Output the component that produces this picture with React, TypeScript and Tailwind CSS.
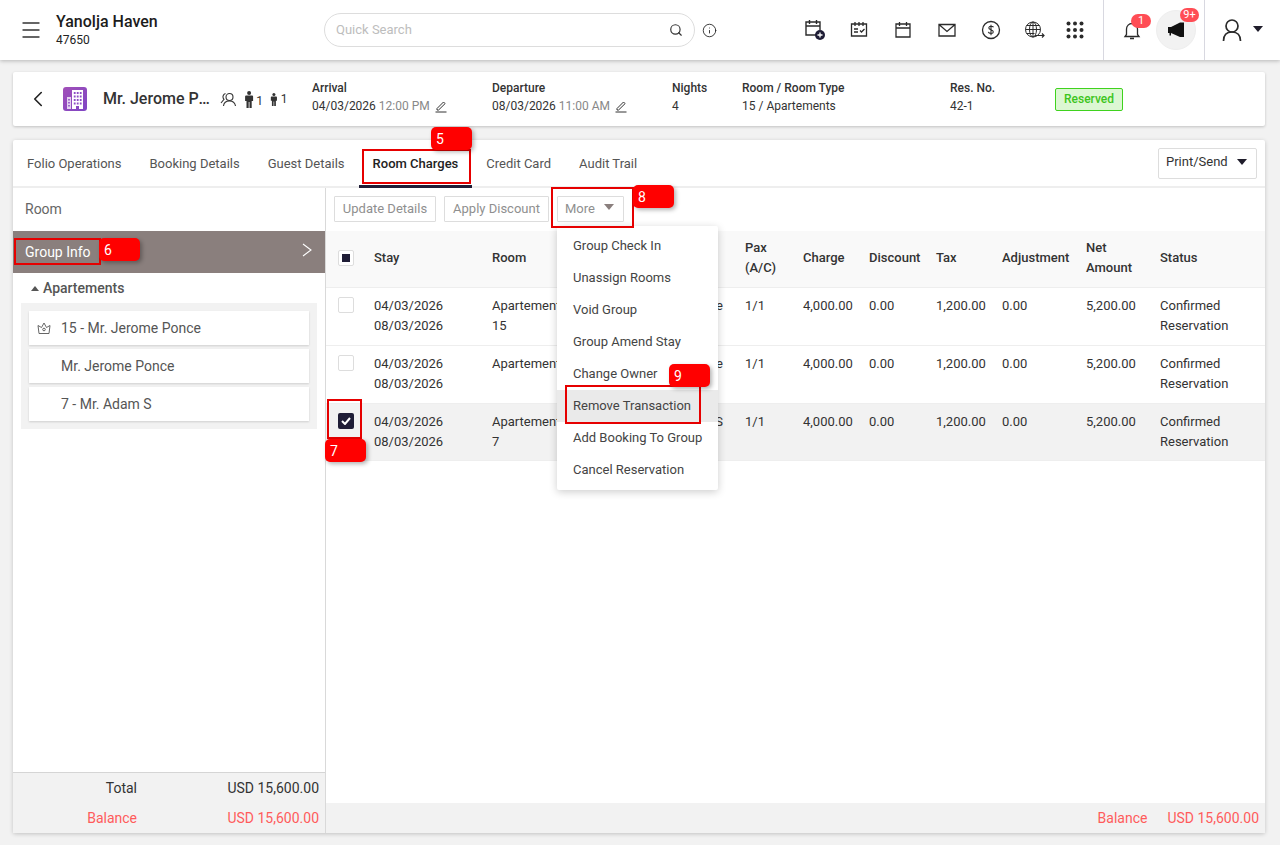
import { ChevronLeft, Info, Menu, Search } from "lucide-react";
import type { ReactNode } from "react";

const tabs = ["Folio Operations", "Booking Details", "Guest Details", "Room Charges", "Credit Card", "Audit Trail"];

const menuItems = [
  "Group Check In",
  "Unassign Rooms",
  "Void Group",
  "Group Amend Stay",
  "Change Owner",
  "Remove Transaction",
  "Add Booking To Group",
  "Cancel Reservation",
];

const rows = [
  { room: "15", guest: "Mr. Jerome Ponce", checked: false },
  { room: "", guest: "Mr. Jerome Ponce", checked: false },
  { room: "7", guest: "Mr. Adam S", checked: true },
];

const tableCols = "grid grid-cols-[48px_118px_125px_128px_58px_66px_67px_66px_84px_74px_1fr]";

const Icon = ({ children, w = 20 }: { children: ReactNode; w?: number }) => (
  <svg width={w} height={w} viewBox="0 0 20 20" fill="none" stroke="#2b2b2b" strokeWidth="1.3">
    {children}
  </svg>
);

const Caret = ({ color = "#1f1d2b" }: { color?: string }) => (
  <svg width="10" height="6" viewBox="0 0 10 6">
    <path d="M0 0h10L5 6z" fill={color} />
  </svg>
);

const Pencil = () => (
  <svg width="14" height="14" viewBox="0 0 14 14" fill="none" stroke="#333" strokeWidth="1">
    <path d="M3 9.500 9.500 3l1.600 1.600L4.600 11H3z" />
    <path d="M1.500 13h11" />
  </svg>
);

const Standing = ({ h }: { h: number }) => (
  <svg width={h * 0.6} height={h} viewBox="0 0 10 17" fill="#333">
    <circle cx="5" cy="2" r="2" />
    <path d="M1 5.500Q1 4.500 2 4.500h6q1 0 1 1V10H7.600v7H5.400v-6h-.8v6H2.400v-7H1z" />
  </svg>
);

const Marker = ({ n, className }: { n: number; className: string }) => (
  <div
    className={`absolute h-[23px] w-[41px] rounded-[5px] bg-[#ff0000] pl-[5px] text-[14px] leading-[24px] text-white shadow-[2px_2px_4px_rgba(0,0,0,0.3)] ${className}`}
  >
    {n}
  </div>
);

const Frame = ({ className }: { className: string }) => (
  <div className={`pointer-events-none absolute border-2 border-[#e60000] ${className}`} />
);

const Check = ({ on }: { on: boolean }) =>
  on ? (
    <div className="flex h-4 w-4 items-center justify-center rounded-[2px] bg-[#1f1d36]">
      <svg width="10" height="8" viewBox="0 0 10 8" fill="none" stroke="#fff" strokeWidth="2">
        <path d="M1 4l3 3 5-6" />
      </svg>
    </div>
  ) : (
    <div className="h-4 w-4 rounded-[2px] border border-[#ddd] bg-white" />
  );

function Header() {
  return (
    <header className="flex h-[60px] items-center bg-white shadow-[0_1px_4px_rgba(0,0,0,0.25)]">
      <div className="flex w-[324px] items-center pl-[19px]">
        <Menu size={24} strokeWidth={1.4} color="#333" />
        <div className="ml-[13px]">
          <div className="text-[16px] font-medium leading-[20px] text-[#1c1c1c]">Yanolja Haven</div>
          <div className="text-[12px] leading-[16px] text-[#222]">47650</div>
        </div>
      </div>
      <div className="flex h-[34px] w-[371px] items-center justify-between rounded-full border border-[#ddd] pl-[11px] pr-[11px]">
        <span className="text-[13px] text-[#bdbdbd]">Quick Search</span>
        <Search size={14} color="#333" />
      </div>
      <Info size={15} strokeWidth={1.4} color="#222" className="ml-[7px]" />
      <div className="ml-[76px] flex w-[300px] shrink-0 items-center">
        <div className="flex w-[44px] justify-center">
          <svg width="22" height="24" viewBox="0 0 22 24" fill="none" stroke="#2b2b2b" strokeWidth="1.4">
            <path d="M12 17H2V4h14v8M2 8h14M5.500 2v4M12.500 2v4" />
            <circle cx="16" cy="17" r="5" fill="#1f1d36" stroke="none" />
            <path d="M16 14.500v5M13.500 17h5" stroke="#fff" strokeWidth="1.300" />
          </svg>
        </div>
        <div className="flex w-[44px] justify-center">
          <Icon>
            <path d="M2.500 4h15v12h-15zM6 2v4M10 2v4M14 2v4M5 9h4M5 12h4M11 10.500l1.500 1.500 3-3" />
          </Icon>
        </div>
        <div className="flex w-[44px] justify-center">
          <Icon>
            <path d="M3 4h14v13H3zM3 8h14M6.500 2v4M13.500 2v4" />
          </Icon>
        </div>
        <div className="flex w-[44px] justify-center">
          <Icon>
            <path d="M2 4.500h16v11.500H2zM2 4.500l8 7 8-7" />
          </Icon>
        </div>
        <div className="flex w-[44px] justify-center">
          <svg width="20" height="20" viewBox="0 0 20 20" fill="none" stroke="#2b2b2b" strokeWidth="1.300">
            <circle cx="10" cy="10" r="8.500" />
            <path d="M12.500 7.300C12 6 8 5.600 7.800 7.700c-.2 2.300 4.700 1.800 4.500 4.300-.2 2.200-4.500 1.900-5-.1M10 4.800v10.400" strokeWidth="1.100" />
          </svg>
        </div>
        <div className="flex w-[44px] justify-center">
          <svg width="22" height="20" viewBox="0 0 22 20" fill="none" stroke="#2b2b2b" strokeWidth="1">
            <circle cx="9" cy="9.500" r="7.500" />
            <ellipse cx="9" cy="9.500" rx="3.500" ry="7.500" />
            <path d="M1.500 9.500h15M2.500 5.500h13M2.500 13.500h8M9 2v15" />
            <path d="M11 15.500h9M18 13.500l2 2-2 2" strokeWidth="1.200" />
          </svg>
        </div>
        <div className="flex w-[36px] justify-center">
          <svg width="18" height="18" viewBox="0 0 18 18" fill="#2b2b2b">
            {[2.500, 9, 15.500].flatMap((y) =>
              [2.500, 9, 15.500].map((x) => <circle key={`${x}-${y}`} cx={x} cy={y} r="2" />),
            )}
          </svg>
        </div>
      </div>
      <div className="relative ml-[10px] flex h-[60px] w-[101px] items-center border-l border-[#d8d8e0]">
        <svg width="18" height="20" viewBox="0 0 18 20" fill="none" stroke="#2b2b2b" strokeWidth="1.300" className="ml-[19px] mt-[2px]">
          <path d="M2 15.500h14l-1.500-2V8a5.500 5.500 0 0 0-11 0v5.500zM7 17.500h4" />
        </svg>
        <div className="absolute left-[27px] top-[14px] h-[14px] w-[20px] rounded-full bg-[#ff4d55] text-center text-[11px] leading-[14px] text-white">
          1
        </div>
        <div className="ml-[15px] flex h-[40px] w-[40px] items-center justify-center rounded-full border border-[#eee] bg-[#f2f2f2]">
          <svg width="16" height="16" viewBox="0 0 16 16" fill="#111">
            <path d="M0 5h3l9-4.500V15L3 11v2.500H1.500V11H0z" />
            <path d="M12 .5h4V15h-4z" />
          </svg>
        </div>
        <div className="absolute left-[76px] top-[8px] h-[14px] w-[19px] rounded-full bg-[#ff4d55] text-center text-[11px] leading-[14px] text-white">
          9+
        </div>
      </div>
      <div className="flex h-[60px] flex-1 items-center border-l border-[#d8d8e0] pl-[14px]">
        <svg width="26" height="26" viewBox="0 0 26 26" fill="none" stroke="#2b2b2b" strokeWidth="1.700">
          <circle cx="13" cy="9" r="6" />
          <path d="M4.500 24c0-6 3-9 8.500-9s8.500 3 8.500 9" />
        </svg>
        <div className="ml-[8px] mb-[3px]">
          <Caret />
        </div>
      </div>
    </header>
  );
}

function Field({ label, children, width }: { label: string; children: ReactNode; width: string }) {
  return (
    <div className={`-mt-[5px] shrink-0 text-[12px] leading-[18px] text-[#333] ${width}`}>
      <div className="font-medium">{label}</div>
      <div className="flex items-center">{children}</div>
    </div>
  );
}

function Summary() {
  return (
    <div className="ml-[13px] mr-[15px] mt-[12px] flex h-[54px] items-center rounded-[2px] bg-white shadow-[0_1px_3px_rgba(0,0,0,0.2)]">
      <ChevronLeft size={26} strokeWidth={1.5} color="#222" className="ml-[12px] shrink-0" />
      <div className="ml-[12px] flex h-[24px] w-[24px] shrink-0 items-center justify-center rounded-[3px] bg-linear-to-br from-[#a24fb8] to-[#7f45c4]">
        <svg width="18" height="19" viewBox="0 0 18 19" fill="#fff">
          <path d="M6 0h11v19h-4v-3h-3v3H6z" />
          <path d="M1 7h4v12H1z" opacity="0.75" />
          <g fill="#8e4ec6">
            {[2, 5.500, 9, 12.500].flatMap((y) =>
              [7.800, 10.800, 13.800].map((x) => <rect key={`${x}-${y}`} x={x} y={y} width="1.800" height="2" />),
            )}
            {[9, 12, 15].map((y) => (
              <rect key={y} x="2.200" y={y} width="1.600" height="1.500" />
            ))}
          </g>
        </svg>
      </div>
      <div className="ml-[16px] w-[108px] shrink-0 truncate text-[16px] font-medium text-[#333]">Mr. Jerome Ponce</div>
      <div className="ml-[9px] flex w-[92px] shrink-0 items-center text-[12px] text-[#333]">
        <svg width="16" height="16" viewBox="0 0 16 16" fill="none" stroke="#333" strokeWidth="1.100">
          <circle cx="9.500" cy="6" r="3.500" />
          <path d="M3.500 15c.3-3 2.500-5 6-5s5.500 2 6 5M5.500 2.500A3.500 3.500 0 0 0 4 8.300L1 12" />
        </svg>
        <div className="ml-[8px] flex items-end">
          <Standing h={17} />
          <span className="ml-[2px] leading-[13px]">1</span>
        </div>
        <div className="ml-[7px] flex items-end">
          <Standing h={13} />
          <span className="ml-[3px] leading-[13px]">1</span>
        </div>
      </div>
      <Field label="Arrival" width="w-[180px]">
        04/03/2026 <span className="ml-[3px] text-[#888]">12:00 PM</span>
        <span className="ml-[4px]">
          <Pencil />
        </span>
      </Field>
      <Field label="Departure" width="w-[180px]">
        08/03/2026 <span className="ml-[3px] text-[#888]">11:00 AM</span>
        <span className="ml-[4px]">
          <Pencil />
        </span>
      </Field>
      <Field label="Nights" width="w-[70px]">
        4
      </Field>
      <Field label="Room / Room Type" width="w-[208px]">
        15 / Apartements
      </Field>
      <Field label="Res. No." width="w-[105px]">
        42-1
      </Field>
      <div className="h-[23px] w-[68px] rounded-[2px] border border-[#3fd21e] bg-[#dcf7d3] text-center text-[12px] font-medium leading-[21px] text-[#3cc51c]">
        Reserved
      </div>
    </div>
  );
}

function Tabs() {
  return (
    <div className="flex h-[48px] items-center border-b-2 border-[#eee] pr-[8px]">
      {tabs.map((t) => (
        <div
          key={t}
          className={
            t === "Room Charges"
              ? "-mb-[2px] flex h-[48px] items-center border-b-[3px] border-[#1f1d36] px-[14px] pt-[3px] text-[13px] font-medium text-[#222]"
              : "px-[14px] pt-[2px] text-[13px] text-[#555]"
          }
        >
          {t}
        </div>
      ))}
      <div className="ml-auto flex h-[31px] w-[99px] items-center justify-between rounded-[2px] border border-[#ddd] pb-[2px] pl-[7px] pr-[9px] text-[13px] text-[#333]">
        Print/Send
        <Caret />
      </div>
    </div>
  );
}

function LeftPanel() {
  return (
    <div className="flex w-[313px] shrink-0 flex-col border-r border-[#d9d9d9]">
      <div className="flex h-[43px] items-center pl-[12px] text-[14px] text-[#666]">Room</div>
      <div className="flex h-[42px] items-center justify-between bg-[#8a7f7d] pl-[12px] pr-[13px] text-[14px] text-white">
        Group Info
        <svg width="10" height="14" viewBox="0 0 10 14" fill="none" stroke="#fff" strokeWidth="1.100" className="mb-[4px]">
          <path d="M1 1l8 6-8 6" />
        </svg>
      </div>
      <div className="flex h-[30px] items-center pl-[18px] text-[14px] font-medium text-[#555]">
        <svg width="8" height="5" viewBox="0 0 8 5" className="mr-[4px]">
          <path d="M0 5h8L4 0z" fill="#555" />
        </svg>
        Apartements
      </div>
      <div className="mx-[8px] flex flex-col gap-[4px] bg-[#f2f2f2] p-[8px]">
        <div className="flex h-[34px] items-center bg-white text-[14px] text-[#555] shadow-[0_1px_2px_rgba(0,0,0,0.15)]">
          <svg width="14" height="14" viewBox="0 0 14 14" fill="none" stroke="#555" strokeWidth="0.900" className="ml-[8px] mr-[10px]">
            <path d="M2 12.500h10l1-8-3.500 2L7 2 4.500 6.500 1 4.500z" />
            <circle cx="7" cy="8.500" r="1.300" />
          </svg>
          15 - Mr. Jerome Ponce
        </div>
        <div className="flex h-[34px] items-center bg-white pl-[32px] text-[14px] text-[#555] shadow-[0_1px_2px_rgba(0,0,0,0.15)]">
          Mr. Jerome Ponce
        </div>
        <div className="flex h-[34px] items-center bg-white pl-[32px] text-[14px] text-[#555] shadow-[0_1px_2px_rgba(0,0,0,0.15)]">
          7 - Mr. Adam S
        </div>
      </div>
      <div className="mt-auto border-t border-[#d5d5d5] bg-[#f2f2f2] text-[14px]">
        <div className="flex h-[30px] items-center justify-between pl-[12px] pr-[6px] text-[#333]">
          <span className="w-[112px] text-right">Total</span>
          <span>USD 15,600.00</span>
        </div>
        <div className="flex h-[30px] items-center justify-between pl-[12px] pr-[6px] text-[#ff5b5b]">
          <span className="w-[112px] text-right">Balance</span>
          <span>USD 15,600.00</span>
        </div>
      </div>
    </div>
  );
}

function ChargesTable() {
  return (
    <div className="relative flex min-w-0 flex-1 flex-col">
      <div className="flex h-[43px] items-center gap-[8px] pb-[2px] pl-[8px] text-[13px] text-[#8f8f8f]">
        <div className="flex h-[26px] w-[102px] items-center justify-center rounded-[1px] border border-[#ddd]">Update Details</div>
        <div className="flex h-[26px] w-[105px] items-center justify-center rounded-[1px] border border-[#ddd]">Apply Discount</div>
        <div className="flex h-[26px] w-[67px] items-center justify-between rounded-[1px] border border-[#ddd] pl-[7px] pr-[9px]">
          More
          <span className="mb-[3px]">
            <Caret color="#8a7f7d" />
          </span>
        </div>
      </div>
      <div className={`${tableCols} h-[57px] items-center border-b border-[#eee] bg-[#f9f9f9] pb-[2px] text-[13px] font-medium leading-[20px] text-[#333]`}>
        <div className="flex justify-center pr-[8px]">
          <div className="flex h-4 w-4 items-center justify-center rounded-[2px] border border-[#ddd] bg-white">
            <div className="h-2 w-2 bg-[#1f1d36]" />
          </div>
        </div>
        <div>Stay</div>
        <div>Room</div>
        <div>Guest</div>
        <div>
          Pax
          <br />
          (A/C)
        </div>
        <div>Charge</div>
        <div>Discount</div>
        <div>Tax</div>
        <div>Adjustment</div>
        <div>
          Net
          <br />
          Amount
        </div>
        <div>Status</div>
      </div>
      {rows.map((r, i) => (
        <div
          key={i}
          className={`${tableCols} border-b border-[#eee] pt-[8px] text-[13px] leading-[20px] text-[#333] ${r.checked ? "h-[57px] bg-[#f2f2f2]" : "h-[58px]"}`}
        >
          <div className="flex justify-center pr-[8px] pt-[1px]">
            <Check on={r.checked} />
          </div>
          <div>
            04/03/2026
            <br />
            08/03/2026
          </div>
          <div>
            Apartements
            <br />
            {r.room}
          </div>
          <div className="pr-[22px] text-right">{r.guest}</div>
          <div>1/1</div>
          <div>4,000.00</div>
          <div>0.00</div>
          <div>1,200.00</div>
          <div>0.00</div>
          <div>5,200.00</div>
          <div className="whitespace-nowrap">
            Confirmed
            <br />
            Reservation
          </div>
        </div>
      ))}
      <div className="mt-auto flex h-[30px] items-center justify-end gap-[20px] bg-[#f2f2f2] pr-[6px] text-[14px] text-[#ff5b5b]">
        <span>Balance</span>
        <span>USD 15,600.00</span>
      </div>
      <div className="absolute left-[231px] top-[38px] z-10 w-[161px] rounded-[2px] bg-white py-[4px] text-[13px] text-[#444] shadow-[0_2px_8px_rgba(0,0,0,0.2)]">
        {menuItems.map((m) => (
          <div key={m} className={`flex h-[32px] items-center pl-[16px] ${m === "Remove Transaction" ? "bg-[#eaeaea]" : ""}`}>
            {m}
          </div>
        ))}
      </div>
    </div>
  );
}

export default function App() {
  return (
    <div className="relative h-[845px] overflow-hidden bg-[#f2f2f2] font-['Roboto',sans-serif]">
      <Header />
      <Summary />
      <div className="ml-[13px] mr-[15px] mt-[14px] flex h-[693px] flex-col rounded-[2px] bg-white shadow-[0_1px_4px_rgba(0,0,0,0.2)]">
        <Tabs />
        <div className="flex min-h-0 flex-1">
          <LeftPanel />
          <ChargesTable />
        </div>
      </div>

      {/* step annotations drawn over the screenshot */}
      <Frame className="left-[362px] top-[149px] z-20 h-[35px] w-[109px]" />
      <Marker n={5} className="left-[431px] top-[127px] z-20" />
      <Frame className="left-[14px] top-[238px] z-20 h-[27px] w-[87px]" />
      <Marker n={6} className="left-[99px] top-[238px] z-20" />
      <Frame className="left-[327px] top-[399px] z-20 h-[40px] w-[35px]" />
      <Marker n={7} className="left-[325px] top-[439px] z-20" />
      <Frame className="left-[551px] top-[187px] z-20 h-[41px] w-[83px]" />
      <Marker n={8} className="left-[633px] top-[185px] z-20" />
      <Frame className="left-[565px] top-[385px] z-20 h-[39px] w-[136px]" />
      <Marker n={9} className="left-[669px] top-[364px] z-20" />
    </div>
  );
}
